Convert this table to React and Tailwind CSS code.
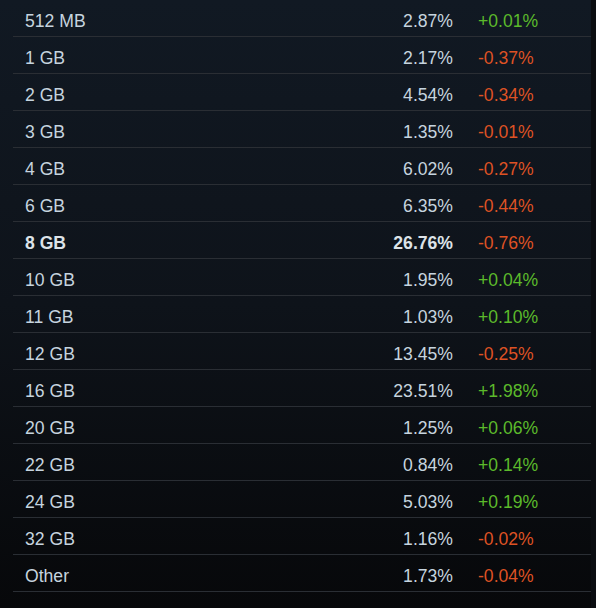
const rows = [
  { label: "512 MB", pct: "2.87%", change: "+0.01%" },
  { label: "1 GB", pct: "2.17%", change: "-0.37%" },
  { label: "2 GB", pct: "4.54%", change: "-0.34%" },
  { label: "3 GB", pct: "1.35%", change: "-0.01%" },
  { label: "4 GB", pct: "6.02%", change: "-0.27%" },
  { label: "6 GB", pct: "6.35%", change: "-0.44%" },
  { label: "8 GB", pct: "26.76%", change: "-0.76%", top: true },
  { label: "10 GB", pct: "1.95%", change: "+0.04%" },
  { label: "11 GB", pct: "1.03%", change: "+0.10%" },
  { label: "12 GB", pct: "13.45%", change: "-0.25%" },
  { label: "16 GB", pct: "23.51%", change: "+1.98%" },
  { label: "20 GB", pct: "1.25%", change: "+0.06%" },
  { label: "22 GB", pct: "0.84%", change: "+0.14%" },
  { label: "24 GB", pct: "5.03%", change: "+0.19%" },
  { label: "32 GB", pct: "1.16%", change: "-0.02%" },
  { label: "Other", pct: "1.73%", change: "-0.04%" },
];

export default function App() {
  return (
    <div className="w-[596px] h-[608px] bg-[#0b0d11] flex" style={{ fontFamily: '"Liberation Sans", Arial, sans-serif' }}>
      <div className="w-[591px] h-full bg-gradient-to-b from-[#111923] via-[#0e131a] to-[#07080a] pl-[13px]">
        {rows.map((r) => (
          <div
            key={r.label}
            className={`flex items-center h-[37px] pt-[8px] border-b border-[#2a2e34] text-[17.6px] leading-none ${r.top ? "font-bold text-[#dde3e8]" : "text-[#c6d4df]"}`}
          >
            <div className="w-[340px] pl-[12px]">{r.label}</div>
            <div className="w-[100px] text-right">{r.pct}</div>
            <div className={`pl-[25px] font-normal ${r.change.startsWith("+") ? "text-[#5cba2b]" : "text-[#de5224]"}`}>
              {r.change}
            </div>
          </div>
        ))}
      </div>
    </div>
  );
}
